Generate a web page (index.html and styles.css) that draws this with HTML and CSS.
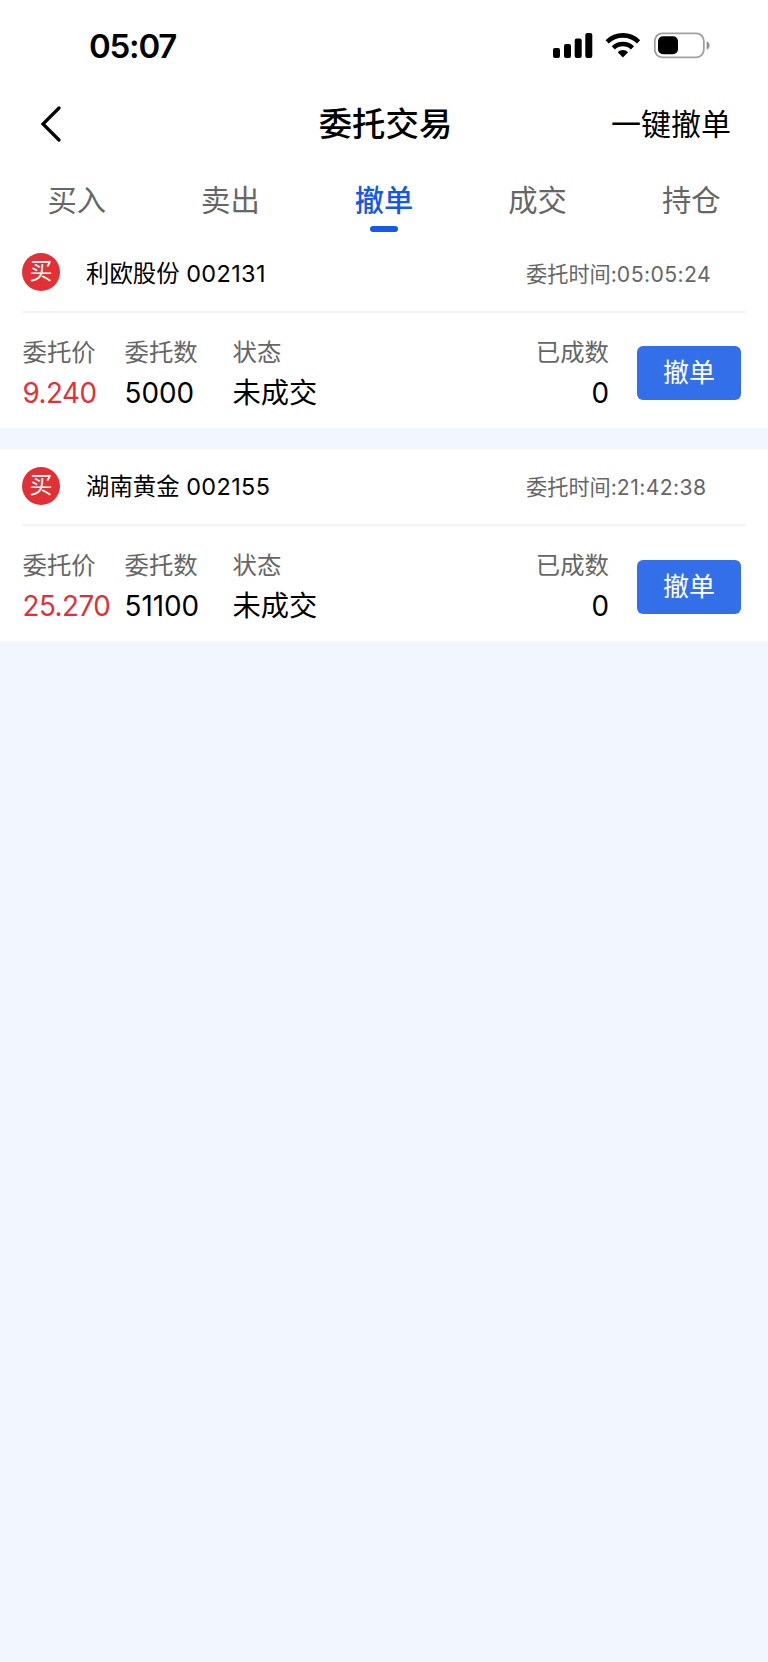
FILE: index.html
```html
<!DOCTYPE html>
<html lang="zh-CN">
<head>
    <meta charset="UTF-8">
    <meta name="viewport" content="width=device-width, initial-scale=1.0">
    <title>委托交易</title>
    <link rel="stylesheet" href="styles.css">
</head>
<body>
    <header class="page-header">
        <div class="status-bar">
            <span class="clock">05:07</span>
            <svg class="status-icons" width="158" height="28" viewBox="0 0 158 28">
                <!-- signal -->
                <rect x="1" y="16" width="7" height="10" rx="2"/>
                <rect x="12" y="12" width="7" height="14" rx="2"/>
                <rect x="22.7" y="6.5" width="7" height="19.5" rx="2"/>
                <rect x="33.3" y="1" width="7" height="25" rx="2"/>
                <!-- wifi -->
                <g fill="none" stroke="#000" stroke-width="4.6">
                    <path d="M55.2 9.8a22.5 22.5 0 0 1 31.4 0"/>
                    <path d="M61.3 15.8a14 14 0 0 1 19.2 0"/>
                </g>
                <path d="M70.9 25.4L65.7 20.2a7.5 7.5 0 0 1 10.4 0z"/>
                <!-- battery -->
                <rect x="102.8" y="1.3" width="49" height="24" rx="7.5" fill="none" stroke="#a0a0a0" stroke-width="1.8"/>
                <rect x="106" y="4.3" width="20" height="18" rx="5"/>
                <path d="M154.6 9.2c4 1.6 4 6.9 0 8.5z" fill="#909090"/>
            </svg>
        </div>

        <div class="nav-bar">
            <a class="back" href="#" aria-label="返回">
                <svg width="22" height="36" viewBox="0 0 22 36">
                    <path d="M19 2L3 18l16 16" fill="none" stroke="#000" stroke-width="3.2" stroke-linecap="round"/>
                </svg>
            </a>
            <h1>委托交易</h1>
            <a class="cancel-all" href="#">一键撤单</a>
        </div>

        <nav class="tabs">
            <a class="tab" href="#">买入</a>
            <a class="tab" href="#">卖出</a>
            <a class="tab active" href="#">撤单</a>
            <a class="tab" href="#">成交</a>
            <a class="tab" href="#">持仓</a>
        </nav>
    </header>

    <main class="orders">
        <section class="order">
            <div class="order-head">
                <span class="side">买</span>
                <span class="stock">利欧股份 <span class="code">002131</span></span>
                <span class="time">委托时间:<span class="digits">05:05:24</span></span>
            </div>
            <div class="order-body">
                <div class="col">
                    <span class="label">委托价</span>
                    <span class="value num price">9.240</span>
                </div>
                <div class="col">
                    <span class="label">委托数</span>
                    <span class="value num">5000</span>
                </div>
                <div class="col">
                    <span class="label">状态</span>
                    <span class="value">未成交</span>
                </div>
                <div class="col done">
                    <span class="label">已成数</span>
                    <span class="value num">0</span>
                </div>
                <button class="cancel-btn">撤单</button>
            </div>
        </section>

        <section class="order">
            <div class="order-head">
                <span class="side">买</span>
                <span class="stock">湖南黄金 <span class="code">002155</span></span>
                <span class="time">委托时间:<span class="digits">21:42:38</span></span>
            </div>
            <div class="order-body">
                <div class="col">
                    <span class="label">委托价</span>
                    <span class="value num price">25.270</span>
                </div>
                <div class="col">
                    <span class="label">委托数</span>
                    <span class="value num">51100</span>
                </div>
                <div class="col">
                    <span class="label">状态</span>
                    <span class="value">未成交</span>
                </div>
                <div class="col done">
                    <span class="label">已成数</span>
                    <span class="value num">0</span>
                </div>
                <button class="cancel-btn">撤单</button>
            </div>
        </section>
    </main>
</body>
</html>
```

FILE: styles.css
```css
* {
    box-sizing: border-box;
}

body {
    margin: 0;
    min-height: 100vh;
    background-color: #f2f6ff;
    color: #000;
    font-family: Inter, "Noto Sans CJK SC", sans-serif;
}

a {
    color: inherit;
    text-decoration: none;
}

.page-header {
    background-color: #fff;
}

.status-bar {
    display: flex;
    justify-content: space-between;
    height: 92px;
    padding: 32px 58px 0 89px;
}

.clock {
    font-size: 33px;
    font-weight: 600;
    line-height: 28px;
    letter-spacing: -1.2px;
}

.nav-bar {
    display: grid;
    grid-template-columns: 1fr auto 1fr;
    align-items: center;
    height: 64px;
    padding: 0 37px 0 40px;
}

.back svg {
    display: block;
}

h1 {
    margin: 0;
    font-size: 33.4px;
    font-weight: 500;
    line-height: 48px;
}

.cancel-all {
    justify-self: end;
    font-size: 30px;
    line-height: 44px;
}

.tabs {
    display: grid;
    grid-template-columns: repeat(5, 1fr);
    height: 79px;
}

.tab {
    display: flex;
    flex-direction: column;
    align-items: center;
    padding-top: 23px;
    color: #666;
    font-size: 29.3px;
    line-height: 44px;
}

.tab.active {
    color: #1659e6;
    font-weight: 500;
}

.tab.active::after {
    content: "";
    width: 28px;
    height: 6px;
    margin-top: 3px;
    border-radius: 3px;
    background-color: #1659e6;
}

.orders {
    display: grid;
    gap: 21px;
}

.order {
    height: 192.5px;
    padding: 0 22px;
    background-color: #fff;
}

.order-head {
    display: grid;
    grid-template-columns: 64px 440px 1fr;
    align-items: center;
    height: 77.5px;
    border-bottom: 2px solid #f2f2f2;
}

.side {
    width: 38px;
    height: 38px;
    margin-bottom: 1px;
    border-radius: 50%;
    background-color: #e13136;
    color: #fff;
    font-size: 23px;
    line-height: 36px;
    text-align: center;
}

.stock {
    padding-top: 2px;
    font-size: 23.4px;
    line-height: 34px;
}

.code {
    letter-spacing: 0.4px;
}

.time {
    padding-top: 2px;
    color: #666;
    font-size: 21.2px;
    line-height: 32px;
}

.digits {
    letter-spacing: 0.4px;
}

.order-body {
    display: grid;
    grid-template-columns: 102px 108px 200px 1fr 104px;
    padding: 21px 5px 0 0.5px;
}

.col {
    display: flex;
    flex-direction: column;
}

.label {
    color: #666;
    font-size: 24.4px;
    line-height: 36px;
}

.value {
    font-size: 28.3px;
    line-height: 47px;
    white-space: nowrap;
}

.num {
    font-size: 27.8px;
}

.price {
    color: #e13136;
    letter-spacing: -0.5px;
}

.done {
    align-items: flex-end;
    padding-right: 28px;
}

.cancel-btn {
    height: 54px;
    margin: 12.5px 0 0;
    padding: 0;
    border: none;
    border-radius: 6px;
    background-color: #336fe8;
    color: #fff;
    font-family: inherit;
    font-size: 26px;
    line-height: 54px;
}
```
